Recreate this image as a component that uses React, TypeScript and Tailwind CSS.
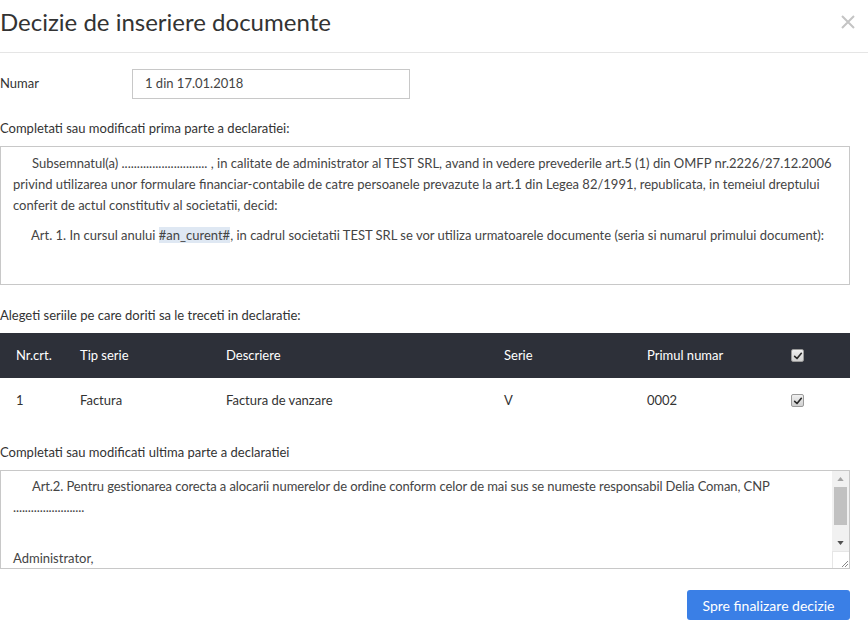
import React from "react";

const font = { fontFamily: "Lato, 'Open Sans', sans-serif" };

function Check() {
  return (
    <span className="inline-flex items-center justify-center w-[13px] h-[13px] rounded-[2px] border border-[#9a9a9a] bg-gradient-to-b from-[#f0f0f0] to-[#d0d0d0]">
      <svg viewBox="0 0 12 12" className="w-[10px] h-[10px]">
        <path d="M2 6.5 L4.8 9 L10 2.8" fill="none" stroke="#2a2a2a" strokeWidth="2" strokeLinecap="round" strokeLinejoin="round" />
      </svg>
    </span>
  );
}

const cols = "grid grid-cols-[64px_146px_278px_143px_144px_75px]";

export default function App() {
  return (
    <div className="w-[868px] h-[620px] bg-white overflow-hidden text-[#333]" style={font}>
      <div className="h-[53px] border-b border-[#e5e5e5] flex justify-between items-start">
        <h1 className="text-[24px] leading-[44px] text-[#333] font-normal">Decizie de inseriere documente</h1>
        <svg viewBox="0 0 16 16" className="w-[16px] h-[16px] mt-[14px] mr-[12px]">
          <path d="M2 2 L14 14 M14 2 L2 14" stroke="#c4c4c4" strokeWidth="2" />
        </svg>
      </div>

      <div className="pr-[18px]">
        <div className="mt-[16px] h-[30px] flex items-center text-[13px]">
          <span className="w-[132px]">Numar</span>
          <div className="w-[278px] h-[30px] border border-[#c8c8c8] px-[12px] flex items-center text-[#444]">1 din 17.01.2018</div>
        </div>

        <p className="mt-[20px] text-[13px] leading-[18px]">Completati sau modificati prima parte a declaratiei:</p>
        <div className="mt-[9px] h-[139px] border border-[#c8c8c8] px-[12px] pt-[6px] text-[13px] leading-[21px] text-[#444] whitespace-nowrap">
          <p className="indent-[19px]">
            Subsemnatul(a) ............................ , in calitate de administrator al TEST SRL, avand in vedere prevederile art.5 (1) din OMFP nr.2226/27.12.2006
            <br />
            privind utilizarea unor formulare financiar-contabile de catre persoanele prevazute la art.1 din Legea 82/1991, republicata, in temeiul dreptului
            <br />
            conferit de actul constitutiv al societatii, decid:
          </p>
          <p className="mt-[9px] indent-[18px]">
            Art. 1. In cursul anului <span className="bg-[#dfe8f3]">#an_curent#</span>, in cadrul societatii TEST SRL se vor utiliza urmatoarele documente (seria si numarul primului document):
          </p>
        </div>

        <p className="mt-[21px] text-[13px] leading-[18px]">Alegeti seriile pe care doriti sa le treceti in declaratie:</p>
        <div className="mt-[9px] text-[13px]">
          <div className={`${cols} h-[45px] items-center bg-[#2d3039] text-white`}>
            <span className="pl-[16px]">Nr.crt.</span>
            <span className="pl-[16px]">Tip serie</span>
            <span className="pl-[16px]">Descriere</span>
            <span className="pl-[16px]">Serie</span>
            <span className="pl-[16px]">Primul numar</span>
            <span className="pl-[16px] flex"><Check /></span>
          </div>
          <div className={`${cols} h-[45px] items-center`}>
            <span className="pl-[16px]">1</span>
            <span className="pl-[16px]">Factura</span>
            <span className="pl-[16px]">Factura de vanzare</span>
            <span className="pl-[16px]">V</span>
            <span className="pl-[16px]">0002</span>
            <span className="pl-[16px] flex"><Check /></span>
          </div>
        </div>

        <p className="mt-[20px] text-[13px] leading-[18px]">Completati sau modificati ultima parte a declaratiei</p>
        <div className="mt-[9px] h-[99px] border border-[#c8c8c8] flex">
          <div className="flex-1 overflow-hidden px-[12px] pt-[5px] text-[13px] leading-[21px] text-[#444] whitespace-nowrap">
            <p className="indent-[19px] tracking-[-0.1px]">
              Art.2. Pentru gestionarea corecta a alocarii numerelor de ordine conform celor de mai sus se numeste responsabil Delia Coman, CNP
              <br />
              ........................
            </p>
            <p className="mt-[30px]">Administrator,</p>
          </div>
          <div className="w-[17px] flex flex-col bg-[#f1f1f1]">
            <div className="h-[16px] flex items-center justify-center">
              <svg viewBox="0 0 8 5" className="w-[7px] h-[4px]"><path d="M0 5 L4 0 L8 5Z" fill="#a3a3a3" /></svg>
            </div>
            <div className="mx-[2px] h-[38px] bg-[#c1c1c1]" />
            <div className="flex-1 flex items-end justify-center pb-[6px]">
              <svg viewBox="0 0 8 5" className="w-[7px] h-[4px]"><path d="M0 0 L4 5 L8 0Z" fill="#505050" /></svg>
            </div>
            <div className="h-[17px] bg-white border-t border-l border-[#e6e6e6] flex items-end justify-end">
              <svg viewBox="0 0 10 10" className="w-[10px] h-[10px]">
                <path d="M9 3 L3 9 M9 6 L6 9" stroke="#888" strokeWidth="1" />
              </svg>
            </div>
          </div>
        </div>

        <div className="mt-[21px] flex justify-end">
          <button className="h-[30px] w-[163px] rounded-[3px] bg-[#3a7fe6] text-white text-[14px]">Spre finalizare decizie</button>
        </div>
      </div>
    </div>
  );
}
